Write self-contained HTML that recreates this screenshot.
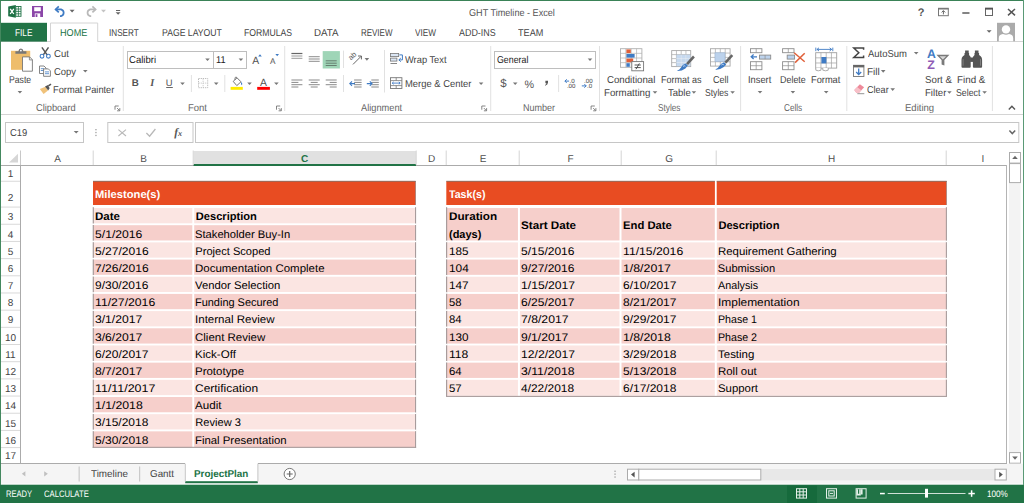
<!DOCTYPE html>
<html lang="en"><head><meta charset="utf-8"><title>GHT Timeline - Excel</title>
<style>
html,body{margin:0;padding:0;background:#fff;}
body{width:1024px;height:503px;overflow:hidden;position:relative;font-family:"Liberation Sans", sans-serif;text-rendering:geometricPrecision;}
#app{position:absolute;left:0;top:0;width:1024px;height:503px;overflow:hidden;background:#fff;}
#app div,#app span,#app svg{position:absolute;box-sizing:border-box;}
#app span.t,#app span.c{white-space:nowrap;}
</style></head><body><div id="app">
<div style="left:0px;top:0px;width:1024px;height:503px;background:#fff;"></div>
<svg style="left:0;top:0" width="1024" height="503" viewBox="0 0 1024 503"><rect x="0" y="41" width="1024" height="1" fill="#d4d4d4"/><rect x="0" y="114" width="1024" height="1" fill="#d4d4d4"/><rect x="1" y="22.8" width="46" height="18.8" fill="#217346"/><path d="M50.5 41.5 V23 H97.7 V41.5" fill="#fff" stroke="#d4d4d4" stroke-width="1"/><rect x="51" y="41" width="46.2" height="1.2" fill="#fff"/><g transform="translate(8.2,5)"><path d="M0 1.6 L7.6 0 V12.8 L0 11.2 Z" fill="#1e7145"/><rect x="7.6" y="1.5" width="5.2" height="9.8" fill="#fff" stroke="#1e7145" stroke-width="0.9"/><path d="M7.6 4 H12.8 M7.6 6.4 H12.8 M7.6 8.8 H12.8 M10.2 1.5 V11.3" stroke="#1e7145" stroke-width="0.8" fill="none"/><path d="M2 3.8 L5.6 9 M5.6 3.8 L2 9" stroke="#fff" stroke-width="1.3" fill="none"/></g><g transform="translate(32,6)"><path d="M0 0 H11 V11 H0 Z" fill="#8b46a8"/><rect x="2.2" y="1.2" width="6.6" height="4" fill="#fff"/><rect x="2.8" y="7.4" width="5.4" height="3.6" fill="#fff"/><rect x="3.6" y="8.2" width="1.8" height="2.8" fill="#8b46a8"/></g><g transform="translate(54.4,6)" fill="none" stroke="#3f7bc4" stroke-width="1.7"><path d="M1.2 3.4 H6.6 A4 3.6 0 0 1 6.6 10.2 H5.6"/><path d="M4.4 0.4 L1.2 3.4 L4.4 6.4"/></g><path d="M69.6 9.8 H74.6 L72.1 12.6 Z" fill="#666"/><g transform="translate(85.6,6)" fill="none" stroke="#b9b9b9" stroke-width="1.7"><path d="M10 3.4 H4.6 A4 3.6 0 0 0 4.6 10.2 H5.6"/><path d="M6.8 0.4 L10 3.4 L6.8 6.4"/></g><path d="M101 9.8 H106 L103.5 12.6 Z" fill="#c4c4c4"/><path d="M116 10 H120.2 V11 H116 Z M115.6 12.2 H120.6 L118.1 14.8 Z" fill="#666"/><g transform="translate(938,7.8)"><rect x="0.5" y="0.5" width="9.8" height="7.4" fill="#fff" stroke="#777" stroke-width="1"/><rect x="0.5" y="0.3" width="9.8" height="1.4" fill="#777"/><path d="M5.4 6.6 V3 M3.6 4.6 L5.4 2.8 L7.2 4.6" stroke="#666" stroke-width="1" fill="none"/></g><rect x="962.3" y="12.2" width="7.2" height="1.6" fill="#666"/><g transform="translate(985,7.8)"><rect x="0.5" y="0.5" width="7" height="7.2" fill="#fff" stroke="#666" stroke-width="1"/><rect x="0" y="0" width="8" height="1.8" fill="#555"/></g><path d="M1008 9 L1015 15.4 M1015 9 L1008 15.4" stroke="#555" stroke-width="1.5" fill="none"/><path d="M986.6 30.2 H991.6 L989.1 32.8 Z" fill="#666"/><g transform="translate(997,22.8)"><rect width="18" height="18.5" fill="#ababab"/><circle cx="9" cy="6.6" r="4.2" fill="#fff"/><path d="M1.8 18.5 V15.5 Q1.8 11.5 6 11.2 Q9 12.6 12 11.2 Q16.2 11.5 16.2 15.5 V18.5 Z" fill="#fff"/></g></svg>
<span class="t" style="top:27px;font-size:10px;line-height:14px;color:#fff;left:14.89px;transform:scaleX(0.825);transform-origin:0 50%;">FILE</span>
<span class="t" style="top:27px;font-size:10px;line-height:14px;color:#217346;left:60.08px;transform:scaleX(0.911);transform-origin:0 50%;">HOME</span>
<span class="t" style="top:27px;font-size:10px;line-height:14px;color:#444;left:109.11px;transform:scaleX(0.813);transform-origin:0 50%;">INSERT</span>
<span class="t" style="top:27px;font-size:10px;line-height:14px;color:#444;left:161.86px;transform:scaleX(0.867);transform-origin:0 50%;">PAGE LAYOUT</span>
<span class="t" style="top:27px;font-size:10px;line-height:14px;color:#444;left:243.86px;transform:scaleX(0.866);transform-origin:0 50%;">FORMULAS</span>
<span class="t" style="top:27px;font-size:10px;line-height:14px;color:#444;left:314.29px;transform:scaleX(0.972);transform-origin:0 50%;">DATA</span>
<span class="t" style="top:27px;font-size:10px;line-height:14px;color:#444;left:361.16px;transform:scaleX(0.796);transform-origin:0 50%;">REVIEW</span>
<span class="t" style="top:27px;font-size:10px;line-height:14px;color:#444;left:415.20px;transform:scaleX(0.82);transform-origin:0 50%;">VIEW</span>
<span class="t" style="top:27px;font-size:10px;line-height:14px;color:#444;left:459.08px;transform:scaleX(0.893);transform-origin:0 50%;">ADD-INS</span>
<span class="t" style="top:27px;font-size:10px;line-height:14px;color:#444;left:518.21px;transform:scaleX(0.91);transform-origin:0 50%;">TEAM</span>
<span class="t" style="top:7px;font-size:10px;line-height:14px;color:#555;left:468.58px;transform:scaleX(0.911);transform-origin:0 50%;">GHT Timeline - Excel</span>
<span class="t" style="top:6px;font-size:11px;line-height:15px;font-weight:bold;color:#555;left:771.00px;width:300px;text-align:center;">?</span>
<svg style="left:0;top:0" width="1024" height="503" viewBox="0 0 1024 503"><g transform="translate(11,48.6)"><rect x="0" y="2.2" width="19.2" height="19" fill="#eebd6c"/><path d="M4.4 5.2 V2.6 H7.4 Q7.6 0 9.9 0 Q12.2 0 12.4 2.6 H15.4 V5.2 Z" fill="#777"/><circle cx="9.9" cy="2" r="0.9" fill="#fff"/><path d="M11.5 8.3 H18.6 L21.4 11.1 V22.6 H11.5 Z" fill="#fff" stroke="#777" stroke-width="0.9"/><path d="M18.4 8.4 V11.3 H21.3" fill="none" stroke="#777" stroke-width="0.8"/></g><path d="M17.60 91.00 H22.20 L19.90 93.60 Z" fill="#777"/><g transform="translate(39.7,47.1)"><path d="M2.2 0.3 L7.6 8 M8.8 0.3 L3.4 8" stroke="#555" stroke-width="1.5" fill="none"/><circle cx="2.3" cy="9.1" r="1.9" fill="none" stroke="#3f7bc4" stroke-width="1.1"/><circle cx="8.7" cy="9.1" r="1.9" fill="none" stroke="#3f7bc4" stroke-width="1.1"/></g><g transform="translate(39,65.5)"><path d="M0.5 0.5 H5 L7 2.5 V8 H0.5 Z" fill="#fff" stroke="#777" stroke-width="0.9"/><path d="M1.8 3.2 H5 M1.8 5 H5" stroke="#3f7bc4" stroke-width="0.8"/><path d="M4.6 3.4 H9.4 L11.4 5.4 V10.8 H4.6 Z" fill="#fff" stroke="#777" stroke-width="0.9"/><path d="M6 6.4 H10 M6 8.2 H10" stroke="#3f7bc4" stroke-width="0.8"/></g><path d="M83.00 69.90 H87.60 L85.30 72.50 Z" fill="#777"/><g transform="translate(39.4,83.9)"><path d="M0.4 5.2 L6 2.8 L8.6 6.6 L4.2 10.2 Z" fill="#f0c27a"/><path d="M5.6 2.6 L8.6 1.2 L10.2 4.4 L8.8 6.6 Z" fill="#555"/><path d="M9 2 L11.6 0.2" stroke="#555" stroke-width="1.6"/></g><g transform="translate(114.5,105.5)" fill="none" stroke="#777" stroke-width="0.9"><path d="M0.5 4.2 V0.5 H4.2"/><path d="M2.6 2.6 L5 5 M5.3 2.6 V5.3 H2.6"/></g><rect x="122.8" y="46" width="1" height="65" fill="#e1e1e1"/><rect x="127.5" y="51.5" width="86" height="17" fill="#fff" stroke="#bebebe" stroke-width="1"/><rect x="213.5" y="51.5" width="33" height="17" fill="#fff" stroke="#bebebe" stroke-width="1"/><path d="M205.20 58.50 H209.80 L207.50 61.10 Z" fill="#777"/><path d="M238.60 58.50 H243.20 L240.90 61.10 Z" fill="#777"/><path d="M258.2 56.4 L260 54.2 L261.8 56.4 Z" fill="#3f7bc4"/><path d="M275.4 54 H279 L277.2 56.2 Z" fill="#3f7bc4"/><rect x="166.2" y="87" width="6.6" height="0.9" fill="#555"/><path d="M180.20 82.50 H184.80 L182.50 85.10 Z" fill="#777"/><rect x="190.9" y="75" width="1" height="17" fill="#e1e1e1"/><g transform="translate(198,78)"><rect x="0.5" y="0.5" width="9.2" height="9.2" fill="none" stroke="#b0b0b0" stroke-width="0.9" stroke-dasharray="1.2 1"/><path d="M5.1 0.5 V9.7 M0.5 5.1 H9.7" stroke="#c4c4c4" stroke-width="0.9" stroke-dasharray="1.2 1"/></g><path d="M213.90 82.50 H218.50 L216.20 85.10 Z" fill="#777"/><rect x="224.3" y="75" width="1" height="17" fill="#e1e1e1"/><g transform="translate(230.6,76.8)"><path d="M2.6 4.6 L6.4 1 L10.4 5 L6.2 8.8 Z" fill="#fff" stroke="#666" stroke-width="0.9"/><path d="M4.4 3.2 V1.4 Q4.4 0.3 5.4 0.3 Q6.4 0.3 6.4 1.4" fill="none" stroke="#666" stroke-width="0.8"/><path d="M10.4 5 Q12.4 7 11.4 8.4 Q10.2 8.4 10.4 5 Z" fill="#3f7bc4"/><rect x="0" y="10.1" width="12.2" height="2.9" fill="#ffec00"/></g><path d="M247.20 82.50 H251.80 L249.50 85.10 Z" fill="#777"/><rect x="257.2" y="86.9" width="12.7" height="2.9" fill="#f00"/><path d="M274.10 82.50 H278.70 L276.40 85.10 Z" fill="#777"/><g transform="translate(276,105.5)" fill="none" stroke="#777" stroke-width="0.9"><path d="M0.5 4.2 V0.5 H4.2"/><path d="M2.6 2.6 L5 5 M5.3 2.6 V5.3 H2.6"/></g><rect x="284.2" y="46" width="1" height="65" fill="#e1e1e1"/><rect x="291.4" y="52.9" width="11" height="1.2" fill="#666"/><rect x="291.4" y="55.5" width="11" height="1" fill="#999"/><rect x="291.4" y="57.8" width="11" height="1" fill="#999"/><rect x="308.7" y="56.2" width="11" height="1" fill="#8c8c8c"/><rect x="308.7" y="58.5" width="11" height="1" fill="#8c8c8c"/><rect x="308.7" y="60.8" width="11" height="1" fill="#8c8c8c"/><rect x="322.7" y="51.1" width="17.2" height="17.4" fill="#9fd5b7"/><rect x="325.7" y="60.3" width="11" height="1" fill="#667f70"/><rect x="325.7" y="62.7" width="11" height="1" fill="#667f70"/><rect x="325.7" y="65.0" width="11" height="1" fill="#667f70"/><rect x="291.4" y="79.5" width="11" height="1" fill="#8a8a8a"/><rect x="291.4" y="81.9" width="7" height="1" fill="#8a8a8a"/><rect x="291.4" y="84.2" width="11" height="1" fill="#8a8a8a"/><rect x="291.4" y="86.5" width="7" height="1" fill="#8a8a8a"/><rect x="308.7" y="79.5" width="11" height="1" fill="#8a8a8a"/><rect x="310.7" y="81.9" width="7" height="1" fill="#8a8a8a"/><rect x="308.7" y="84.2" width="11" height="1" fill="#8a8a8a"/><rect x="310.7" y="86.5" width="7" height="1" fill="#8a8a8a"/><rect x="325.7" y="79.5" width="11" height="1" fill="#8a8a8a"/><rect x="329.7" y="81.9" width="7" height="1" fill="#8a8a8a"/><rect x="325.7" y="84.2" width="11" height="1" fill="#8a8a8a"/><rect x="329.7" y="86.5" width="7" height="1" fill="#8a8a8a"/><rect x="343.0" y="50.6" width="1" height="17.4" fill="#e1e1e1"/><rect x="343.0" y="75" width="1" height="17" fill="#e1e1e1"/><g transform="translate(349.4,54)"><text x="0" y="0" font-size="7.4" fill="#555" transform="translate(1.6,6.6) rotate(-45)" font-family="Liberation Sans, sans-serif">ab</text><path d="M3.6 10.4 L11.6 2.4 M8.6 2 H12 V5.4" fill="none" stroke="#555" stroke-width="0.9"/></g><path d="M364.60 58.10 H369.20 L366.90 60.70 Z" fill="#777"/><rect x="354.1" y="79.5" width="7.5" height="1" fill="#8a8a8a"/><rect x="354.1" y="81.9" width="7.5" height="1" fill="#8a8a8a"/><rect x="354.1" y="84.2" width="7.5" height="1" fill="#8a8a8a"/><rect x="354.1" y="86.5" width="7.5" height="1" fill="#8a8a8a"/><path d="M350.0 83.6 H355.0 M352.0 81.4 L349.8 83.6 L352.0 85.8" fill="none" stroke="#3f7bc4" stroke-width="1.1"/><rect x="371.3" y="79.5" width="7.5" height="1" fill="#8a8a8a"/><rect x="371.3" y="81.9" width="7.5" height="1" fill="#8a8a8a"/><rect x="371.3" y="84.2" width="7.5" height="1" fill="#8a8a8a"/><rect x="371.3" y="86.5" width="7.5" height="1" fill="#8a8a8a"/><path d="M366.8 83.6 H371.8 M369.8 81.4 L372.0 83.6 L369.8 85.8" fill="none" stroke="#3f7bc4" stroke-width="1.1"/><rect x="384.0" y="50" width="1" height="42.5" fill="#e1e1e1"/><g transform="translate(390,52.9)"><rect x="0.5" y="0.5" width="8.2" height="3.2" fill="#dbe6f4" stroke="#777" stroke-width="0.8"/><rect x="0.5" y="5.2" width="6.4" height="3" fill="#dbe6f4" stroke="#777" stroke-width="0.8"/><path d="M0.5 10.6 H7" stroke="#777" stroke-width="0.9"/><path d="M9.4 2 H12.4 V7 H9 M10.8 5.2 L8.8 7 L10.8 8.8" fill="none" stroke="#3f7bc4" stroke-width="1"/></g><g transform="translate(390,77.2)"><rect x="0.5" y="0.5" width="11.4" height="10.8" fill="#fff" stroke="#777" stroke-width="0.9"/><path d="M0.5 3.4 H11.9 M0.5 8.4 H11.9 M6.2 0.5 V3.4 M6.2 8.4 V11.3" stroke="#777" stroke-width="0.8"/><path d="M2.4 5.9 H10 M3.6 4.7 L2.2 5.9 L3.6 7.1 M8.8 4.7 L10.2 5.9 L8.8 7.1" fill="none" stroke="#3f7bc4" stroke-width="0.9"/></g><path d="M478.80 82.50 H483.40 L481.10 85.10 Z" fill="#777"/><g transform="translate(481.3,105.5)" fill="none" stroke="#777" stroke-width="0.9"><path d="M0.5 4.2 V0.5 H4.2"/><path d="M2.6 2.6 L5 5 M5.3 2.6 V5.3 H2.6"/></g><rect x="490.2" y="46" width="1" height="65" fill="#e1e1e1"/><rect x="494.5" y="51.5" width="101" height="17" fill="#fff" stroke="#bebebe" stroke-width="1"/><path d="M587.70 58.50 H592.30 L590.00 61.10 Z" fill="#777"/><path d="M512.90 82.50 H517.50 L515.20 85.10 Z" fill="#777"/><path d="M545.4 80.8 H548 V82.6 Q548 84.8 545 85.8 V84.9 Q546.4 84.3 546.4 83.2 H545.4 Z" fill="#555"/><rect x="558.1" y="75" width="1" height="17" fill="#e1e1e1"/><g transform="translate(564.5,78.5)"><path d="M0.4 2.6 H4.6 M2.2 0.8 L0.4 2.6 L2.2 4.4" fill="none" stroke="#3f7bc4" stroke-width="1"/><text x="5" y="4.4" font-family="Liberation Sans, sans-serif" font-size="6.2" fill="#444">.0</text><text x="2.4" y="9.4" font-family="Liberation Sans, sans-serif" font-size="6.2" fill="#444">.00</text></g><g transform="translate(581.4,78.5)"><path d="M0.4 7.4 H4.8 M3 5.6 L4.8 7.4 L3 9.2" fill="none" stroke="#3f7bc4" stroke-width="1"/><text x="2.6" y="4.4" font-family="Liberation Sans, sans-serif" font-size="6.2" fill="#444">.00</text><text x="5.6" y="9.4" font-family="Liberation Sans, sans-serif" font-size="6.2" fill="#444">.0</text></g><g transform="translate(590.6,105.5)" fill="none" stroke="#777" stroke-width="0.9"><path d="M0.5 4.2 V0.5 H4.2"/><path d="M2.6 2.6 L5 5 M5.3 2.6 V5.3 H2.6"/></g><rect x="599.0" y="46" width="1" height="65" fill="#e1e1e1"/><g transform="translate(620,48.2)"><rect x="0.5" y="0.5" width="21.4" height="18.6" fill="#fff" stroke="#b0b0b0" stroke-width="0.9"/><path d="M5.85 0.5 V19.1" stroke="#b0b0b0" stroke-width="0.7"/><path d="M11.20 0.5 V19.1" stroke="#b0b0b0" stroke-width="0.7"/><path d="M16.55 0.5 V19.1" stroke="#b0b0b0" stroke-width="0.7"/><path d="M0.5 5.15 H21.9" stroke="#b0b0b0" stroke-width="0.7"/><path d="M0.5 9.80 H21.9" stroke="#b0b0b0" stroke-width="0.7"/><path d="M0.5 14.45 H21.9" stroke="#b0b0b0" stroke-width="0.7"/><rect x="6.4" y="1.2" width="4.4" height="3.6" fill="#e0603a"/><rect x="6.4" y="5.8" width="8.2" height="3.6" fill="#3f7bc4"/><rect x="6.4" y="10.4" width="6.8" height="3.6" fill="#e0603a"/><rect x="6.4" y="15" width="3.4" height="3.6" fill="#3f7bc4"/><rect x="11.8" y="13.4" width="11.8" height="9.2" fill="#fff" stroke="#777" stroke-width="0.9"/><path d="M14.6 16.8 H20.8 M14.6 19.4 H20.8 M19.4 15.2 L16 21" stroke="#444" stroke-width="0.9" fill="none"/></g><path d="M652.70 91.20 H657.30 L655.00 93.80 Z" fill="#777"/><g transform="translate(671.2,50.1)"><rect x="0.5" y="0.5" width="19" height="16" fill="#fff" stroke="#a8a8a8" stroke-width="0.9"/><path d="M5.25 0.5 V16.5" stroke="#a8a8a8" stroke-width="0.7"/><path d="M10.00 0.5 V16.5" stroke="#a8a8a8" stroke-width="0.7"/><path d="M14.75 0.5 V16.5" stroke="#a8a8a8" stroke-width="0.7"/><path d="M0.5 4.50 H19.5" stroke="#a8a8a8" stroke-width="0.7"/><path d="M0.5 8.50 H19.5" stroke="#a8a8a8" stroke-width="0.7"/><path d="M0.5 12.50 H19.5" stroke="#a8a8a8" stroke-width="0.7"/><rect x="5.2" y="4.6" width="14" height="11.6" fill="#bcd2ec" opacity="0.85"/><path d="M5.2 8.5 H19.4 M5.2 12.4 H19.4 M10 4.6 V16.4 M14.7 4.6 V16.4" stroke="#e8eef6" stroke-width="0.7"/></g><g transform="translate(676.4,55)"><path d="M9.6 8.2 L16.6 0.6 L18.4 2.4 L11.6 10 Z" fill="#666"/><path d="M9.2 8.6 L11.4 10.6 L9 13.4 Q5 16.4 0.4 16 Q3.4 14.4 4.6 12.4 Q6 9.6 9.2 8.6 Z" fill="#3f7bc4"/><path d="M6.6 11.4 Q8 10.2 9 11.2" stroke="#cfe0f4" stroke-width="0.9" fill="none"/></g><path d="M691.60 91.20 H696.20 L693.90 93.80 Z" fill="#777"/><g transform="translate(710,48.2)"><rect x="0.5" y="0.5" width="19.6" height="17.4" fill="#fff" stroke="#a8a8a8" stroke-width="0.9"/><path d="M5.40 0.5 V17.9" stroke="#a8a8a8" stroke-width="0.7"/><path d="M10.30 0.5 V17.9" stroke="#a8a8a8" stroke-width="0.7"/><path d="M15.20 0.5 V17.9" stroke="#a8a8a8" stroke-width="0.7"/><path d="M0.5 4.85 H20.1" stroke="#a8a8a8" stroke-width="0.7"/><path d="M0.5 9.20 H20.1" stroke="#a8a8a8" stroke-width="0.7"/><path d="M0.5 13.55 H20.1" stroke="#a8a8a8" stroke-width="0.7"/><rect x="5" y="4.6" width="10" height="8.6" fill="#bcd2ec" stroke="#9ab4d4" stroke-width="0.6"/></g><g transform="translate(714.8,53.6)"><path d="M9.6 8.2 L16.6 0.6 L18.4 2.4 L11.6 10 Z" fill="#666"/><path d="M9.2 8.6 L11.4 10.6 L9 13.4 Q5 16.4 0.4 16 Q3.4 14.4 4.6 12.4 Q6 9.6 9.2 8.6 Z" fill="#3f7bc4"/><path d="M6.6 11.4 Q8 10.2 9 11.2" stroke="#cfe0f4" stroke-width="0.9" fill="none"/></g><path d="M730.30 91.20 H734.90 L732.60 93.80 Z" fill="#777"/><rect x="740.1" y="46" width="1" height="65" fill="#e1e1e1"/><g transform="translate(750,48.2)"><g transform="translate(0,0)"><rect x="0.5" y="0.5" width="11.4" height="4" fill="#fff" stroke="#8c8c8c" stroke-width="0.9"/><path d="M6.20 0.5 V4.5" stroke="#8c8c8c" stroke-width="0.7"/></g><g transform="translate(9,6.4)"><rect x="0.5" y="0.5" width="11.2" height="4" fill="#bcd2ec" stroke="#8c8c8c" stroke-width="0.9"/><path d="M6.10 0.5 V4.5" stroke="#8c8c8c" stroke-width="0.7"/></g><g transform="translate(0,13)"><rect x="0.5" y="0.5" width="11.4" height="8" fill="#fff" stroke="#8c8c8c" stroke-width="0.9"/><path d="M6.20 0.5 V8.5" stroke="#8c8c8c" stroke-width="0.7"/><path d="M0.5 4.50 H11.9" stroke="#8c8c8c" stroke-width="0.7"/></g><path d="M1.4 8.6 H7 M3.6 6.4 L1.2 8.6 L3.6 10.8" fill="none" stroke="#3f7bc4" stroke-width="1.3"/></g><path d="M757.70 91.00 H762.30 L760.00 93.60 Z" fill="#777"/><g transform="translate(782.1,48.2)"><g transform="translate(0,0)"><rect x="0.5" y="0.5" width="11.4" height="4" fill="#fff" stroke="#8c8c8c" stroke-width="0.9"/><path d="M6.20 0.5 V4.5" stroke="#8c8c8c" stroke-width="0.7"/></g><g transform="translate(4.6,6.4)"><rect x="0.5" y="0.5" width="7.4" height="4" fill="#bcd2ec" stroke="#8c8c8c" stroke-width="0.9"/></g><g transform="translate(0,13)"><rect x="0.5" y="0.5" width="11.4" height="8" fill="#fff" stroke="#8c8c8c" stroke-width="0.9"/><path d="M6.20 0.5 V8.5" stroke="#8c8c8c" stroke-width="0.7"/><path d="M0.5 4.50 H11.9" stroke="#8c8c8c" stroke-width="0.7"/></g><path d="M12 4.6 L22.6 13.6 M22.6 5 L13 14.4" fill="none" stroke="#e0603a" stroke-width="1.5"/></g><path d="M790.60 91.00 H795.20 L792.90 93.60 Z" fill="#777"/><g transform="translate(815.2,47.6)"><path d="M0.6 0 V3.6 M17.6 0 V3.6 M1.6 1.8 H16.6 M3.8 0.2 L1.8 1.8 L3.8 3.4 M14.4 0.2 L16.4 1.8 L14.4 3.4" fill="none" stroke="#3f7bc4" stroke-width="0.9"/><g transform="translate(0,4.6)"><rect x="0.5" y="0.5" width="21" height="15.4" fill="#fff" stroke="#a0a0a0" stroke-width="0.9"/><path d="M5.75 0.5 V15.9" stroke="#a0a0a0" stroke-width="0.7"/><path d="M11.00 0.5 V15.9" stroke="#a0a0a0" stroke-width="0.7"/><path d="M16.25 0.5 V15.9" stroke="#a0a0a0" stroke-width="0.7"/><path d="M0.5 5.63 H21.5" stroke="#a0a0a0" stroke-width="0.7"/><path d="M0.5 10.77 H21.5" stroke="#a0a0a0" stroke-width="0.7"/></g><rect x="6.2" y="9.4" width="5" height="6.4" fill="#3f7bc4"/><path d="M0.6 20.4 V22.6 Q3 23.8 5.8 22.6 V20.4 M7.6 20.4 V22.6 Q10.4 23.8 13 22.6 V20.4" fill="#fff" stroke="#999" stroke-width="0.8"/></g><path d="M823.90 91.00 H828.50 L826.20 93.60 Z" fill="#777"/><rect x="846.3" y="46" width="1" height="65" fill="#e1e1e1"/><path d="M863.6 49.8 V48 H853.8 L858.8 52.8 L853.8 57.4 H863.6 V55.6" fill="none" stroke="#444" stroke-width="1.5" stroke-linejoin="miter"/><path d="M913.90 51.90 H918.50 L916.20 54.50 Z" fill="#777"/><g transform="translate(853,64.8)"><rect x="0.5" y="0.5" width="10.4" height="11.2" fill="#fff" stroke="#777" stroke-width="0.9"/><rect x="0.3" y="0.2" width="10.8" height="2.4" fill="#666"/><path d="M5.7 3.8 V9.6 M3.2 7.2 L5.7 9.8 L8.2 7.2" fill="none" stroke="#3f7bc4" stroke-width="1.3"/></g><path d="M880.90 70.10 H885.50 L883.20 72.70 Z" fill="#777"/><g transform="translate(853.9,83.9)"><path d="M0.4 6 L6 0.4 L10.2 3.4 L5 9 H2.6 Z" fill="#ee8a9a"/><path d="M0.4 6 L3.2 3.2 L7.4 6.4 L5 9 H2.6 Z" fill="#f7c0c8"/><path d="M3.4 9.8 H10.4" stroke="#888" stroke-width="0.9"/></g><path d="M890.40 88.30 H895.00 L892.70 90.90 Z" fill="#777"/><path d="M936.4 54.8 H949.4 L944.4 60 V65.6 L941.6 64.4 V60 Z" fill="#7a7a7a"/><path d="M939.6 56.2 H946.2 L942.9 59.4 Z" fill="#d8d8d8"/><path d="M947.10 91.20 H951.70 L949.40 93.80 Z" fill="#777"/><g transform="translate(961.5,50.1)"><path d="M3 3 H7.6 V5 L9.2 7 V16.6 Q9.2 17.6 8.2 17.6 H1 Q0 17.6 0 16.6 V9.6 Q0 7.6 1.4 6.2 L3 5 Z" fill="#555"/><path d="M13 3 H17.6 V5 L19.2 6.2 Q20.6 7.6 20.6 9.6 V16.6 Q20.6 17.6 19.6 17.6 H12.4 Q11.4 17.6 11.4 16.6 V7 L13 5 Z" fill="#555"/><rect x="3.6" y="0.4" width="3.6" height="3" fill="#555"/><rect x="13.4" y="0.4" width="3.6" height="3" fill="#555"/><rect x="8.6" y="7.4" width="3.4" height="4.4" fill="#555"/><path d="M1.6 9 V15.6 M19 9 V15.6" stroke="#8a8a8a" stroke-width="0.8"/></g><path d="M982.30 91.20 H986.90 L984.60 93.80 Z" fill="#777"/><rect x="991.9" y="46" width="1" height="65" fill="#e1e1e1"/><path d="M1008.8 109.4 L1011.9 106.2 L1015 109.4" fill="none" stroke="#555" stroke-width="1.4"/></svg>
<span class="t" style="top:74px;font-size:10px;line-height:14px;color:#444;left:9.36px;transform:scaleX(0.866);transform-origin:0 50%;">Paste</span>
<span class="t" style="top:48px;font-size:10px;line-height:14px;color:#444;left:53.65px;transform:scaleX(0.957);transform-origin:0 50%;">Cut</span>
<span class="t" style="top:66px;font-size:10px;line-height:14px;color:#444;left:53.66px;transform:scaleX(0.945);transform-origin:0 50%;">Copy</span>
<span class="t" style="top:84px;font-size:10px;line-height:14px;color:#444;left:53.42px;transform:scaleX(0.928);transform-origin:0 50%;">Format Painter</span>
<span class="t" style="top:102px;font-size:10px;line-height:14px;color:#666;left:36.07px;transform:scaleX(0.926);transform-origin:0 50%;">Clipboard</span>
<span class="t" style="top:54px;font-size:10px;line-height:14px;color:#222;left:129.16px;transform:scaleX(0.953);transform-origin:0 50%;">Calibri</span>
<span class="t" style="top:54px;font-size:10px;line-height:14px;color:#222;left:215.68px;transform:scaleX(0.92);transform-origin:0 50%;">11</span>
<span class="t" style="top:54px;font-size:10.4px;line-height:15px;color:#555;left:252.22px;">A</span>
<span class="t" style="top:56px;font-size:8.2px;line-height:11px;color:#555;left:270.12px;">A</span>
<span class="t" style="top:77px;font-size:9.8px;line-height:14px;font-weight:bold;color:#555;left:131.63px;">B</span>
<span class="t" style="top:77px;font-size:10.2px;line-height:14px;font-weight:bold;font-style:italic;font-family:'Liberation Serif',serif;color:#555;left:150.16px;">I</span>
<span class="t" style="top:76px;font-size:9.4px;line-height:13px;color:#555;left:165.85px;">U</span>
<span class="t" style="top:76px;font-size:10.4px;line-height:15px;color:#555;left:260.02px;">A</span>
<span class="t" style="top:102px;font-size:10px;line-height:14px;color:#666;left:188.30px;transform:scaleX(0.95);transform-origin:0 50%;">Font</span>
<span class="t" style="top:54px;font-size:10px;line-height:14px;color:#444;left:405.29px;transform:scaleX(0.93);transform-origin:0 50%;">Wrap Text</span>
<span class="t" style="top:78px;font-size:10px;line-height:14px;color:#444;left:405.21px;transform:scaleX(0.94);transform-origin:0 50%;">Merge &amp; Center</span>
<span class="t" style="top:102px;font-size:10px;line-height:14px;color:#666;left:360.93px;transform:scaleX(0.925);transform-origin:0 50%;">Alignment</span>
<span class="t" style="top:54px;font-size:10px;line-height:14px;color:#222;left:496.69px;transform:scaleX(0.881);transform-origin:0 50%;">General</span>
<span class="t" style="top:76px;font-size:11.5px;line-height:16px;color:#555;left:500.14px;">$</span>
<span class="t" style="top:78px;font-size:10.8px;line-height:15px;color:#555;left:524.59px;">%</span>
<span class="t" style="top:102px;font-size:10px;line-height:14px;color:#666;left:523.04px;transform:scaleX(0.902);transform-origin:0 50%;">Number</span>
<span class="t" style="top:74px;font-size:10px;line-height:14px;color:#444;left:607.15px;transform:scaleX(0.967);transform-origin:0 50%;">Conditional</span>
<span class="t" style="top:87px;font-size:10px;line-height:14px;color:#444;left:604.29px;transform:scaleX(0.97);transform-origin:0 50%;">Formatting</span>
<span class="t" style="top:74px;font-size:10px;line-height:14px;color:#444;left:660.84px;transform:scaleX(0.901);transform-origin:0 50%;">Format as</span>
<span class="t" style="top:87px;font-size:10px;line-height:14px;color:#444;left:667.60px;transform:scaleX(0.952);transform-origin:0 50%;">Table</span>
<span class="t" style="top:74px;font-size:10px;line-height:14px;color:#444;left:712.58px;transform:scaleX(0.904);transform-origin:0 50%;">Cell</span>
<span class="t" style="top:87px;font-size:10px;line-height:14px;color:#444;left:705.01px;transform:scaleX(0.859);transform-origin:0 50%;">Styles</span>
<span class="t" style="top:102px;font-size:10px;line-height:14px;color:#666;left:658.43px;transform:scaleX(0.825);transform-origin:0 50%;">Styles</span>
<span class="t" style="top:74px;font-size:10px;line-height:14px;color:#444;left:748.48px;transform:scaleX(0.928);transform-origin:0 50%;">Insert</span>
<span class="t" style="top:74px;font-size:10px;line-height:14px;color:#444;left:780.24px;transform:scaleX(0.892);transform-origin:0 50%;">Delete</span>
<span class="t" style="top:74px;font-size:10px;line-height:14px;color:#444;left:811.32px;transform:scaleX(0.926);transform-origin:0 50%;">Format</span>
<span class="t" style="top:102px;font-size:10px;line-height:14px;color:#666;left:784.42px;transform:scaleX(0.817);transform-origin:0 50%;">Cells</span>
<span class="t" style="top:48px;font-size:10px;line-height:14px;color:#444;left:867.52px;transform:scaleX(0.948);transform-origin:0 50%;">AutoSum</span>
<span class="t" style="top:66px;font-size:10px;line-height:14px;color:#444;left:866.97px;">Fill</span>
<span class="t" style="top:84px;font-size:10px;line-height:14px;color:#444;left:867.28px;transform:scaleX(0.906);transform-origin:0 50%;">Clear</span>
<span class="t" style="top:46px;font-size:12.4px;line-height:17px;font-weight:bold;color:#3f7bc4;left:926.60px;transform:scaleX(0.99);transform-origin:0 50%;">A</span>
<span class="t" style="top:57px;font-size:12.4px;line-height:17px;font-weight:bold;color:#8e5bb5;left:927.34px;">Z</span>
<span class="t" style="top:74px;font-size:10px;line-height:14px;color:#444;left:924.53px;transform:scaleX(0.971);transform-origin:0 50%;">Sort &amp;</span>
<span class="t" style="top:87px;font-size:10px;line-height:14px;color:#444;left:924.79px;transform:scaleX(0.961);transform-origin:0 50%;">Filter</span>
<span class="t" style="top:74px;font-size:10px;line-height:14px;color:#444;left:957.38px;transform:scaleX(0.982);transform-origin:0 50%;">Find &amp;</span>
<span class="t" style="top:87px;font-size:10px;line-height:14px;color:#444;left:956.00px;transform:scaleX(0.876);transform-origin:0 50%;">Select</span>
<span class="t" style="top:102px;font-size:10px;line-height:14px;color:#666;left:904.50px;transform:scaleX(0.954);transform-origin:0 50%;">Editing</span>
<svg style="left:0;top:0" width="1024" height="503" viewBox="0 0 1024 503"><rect x="5.5" y="122.5" width="78" height="20" fill="#fff" stroke="#c6c6c6" stroke-width="1"/><path d="M73.70 130.90 H78.70 L76.20 133.50 Z" fill="#777"/><rect x="95.3" y="129.0" width="1.3" height="1.3" fill="#a0a0a0"/><rect x="95.3" y="131.9" width="1.3" height="1.3" fill="#a0a0a0"/><rect x="95.3" y="134.8" width="1.3" height="1.3" fill="#a0a0a0"/><rect x="107.8" y="122.5" width="85.2" height="20" fill="#fff" stroke="#c6c6c6" stroke-width="1"/><rect x="195.5" y="122.5" width="823.3" height="20" fill="#fff" stroke="#c6c6c6" stroke-width="1"/><path d="M118.4 129.6 L126 136 M126 129.6 L118.4 136" fill="none" stroke="#b8b8b8" stroke-width="1.1"/><path d="M146.4 133 L149.6 136.2 L155.4 129" fill="none" stroke="#b8b8b8" stroke-width="1.3"/><path d="M1009.4 130.6 L1012.3 133.6 L1015.2 130.6" fill="none" stroke="#666" stroke-width="1.5"/></svg>
<span class="t" style="top:127px;font-size:10px;line-height:14px;color:#444;left:10.06px;transform:scaleX(0.941);transform-origin:0 50%;">C19</span>
<span class="t" style="top:125px;font-size:11.5px;line-height:16px;font-weight:bold;font-style:italic;font-family:'Liberation Serif',serif;color:#555;left:174.36px;">f</span>
<span class="t" style="top:128px;font-size:8.2px;line-height:11px;font-weight:bold;font-style:italic;font-family:'Liberation Serif',serif;color:#555;left:178.09px;">x</span>
<svg style="left:0;top:0" width="1024" height="503" viewBox="0 0 1024 503"><rect x="0" y="165" width="1007" height="1" fill="#ababab"/><rect x="193.5" y="151" width="222.5" height="14" fill="#e1e1e1"/><rect x="193.5" y="164" width="222.5" height="2" fill="#217346"/><rect x="92.7" y="150.5" width="1" height="14.5" fill="#d4d4d4"/><rect x="192.7" y="150.5" width="1" height="14.5" fill="#d4d4d4"/><rect x="415.7" y="150.5" width="1" height="14.5" fill="#d4d4d4"/><rect x="445.7" y="150.5" width="1" height="14.5" fill="#d4d4d4"/><rect x="518.7" y="150.5" width="1" height="14.5" fill="#d4d4d4"/><rect x="620.7" y="150.5" width="1" height="14.5" fill="#d4d4d4"/><rect x="715.7" y="150.5" width="1" height="14.5" fill="#d4d4d4"/><rect x="945.7" y="150.5" width="1" height="14.5" fill="#d4d4d4"/><rect x="20" y="150.5" width="1" height="14.5" fill="#c8c8c8"/><path d="M18 153.8 V162.4 H9 Z" fill="#d6d6d6"/><rect x="20" y="166" width="1" height="297" fill="#ababab"/><rect x="1" y="180.75" width="19" height="1" fill="#d9d9d9"/><rect x="1" y="206.57" width="19" height="1" fill="#d9d9d9"/><rect x="1" y="223.75" width="19" height="1" fill="#d9d9d9"/><rect x="1" y="240.93" width="19" height="1" fill="#d9d9d9"/><rect x="1" y="258.11" width="19" height="1" fill="#d9d9d9"/><rect x="1" y="275.29" width="19" height="1" fill="#d9d9d9"/><rect x="1" y="292.47" width="19" height="1" fill="#d9d9d9"/><rect x="1" y="309.65" width="19" height="1" fill="#d9d9d9"/><rect x="1" y="326.83" width="19" height="1" fill="#d9d9d9"/><rect x="1" y="344.01" width="19" height="1" fill="#d9d9d9"/><rect x="1" y="361.19" width="19" height="1" fill="#d9d9d9"/><rect x="1" y="378.37" width="19" height="1" fill="#d9d9d9"/><rect x="1" y="395.55" width="19" height="1" fill="#d9d9d9"/><rect x="1" y="412.73" width="19" height="1" fill="#d9d9d9"/><rect x="1" y="429.91" width="19" height="1" fill="#d9d9d9"/><rect x="1" y="447.09" width="19" height="1" fill="#d9d9d9"/><rect x="1006" y="165" width="1" height="299" fill="#b4b4b4"/><rect x="0" y="463" width="1007" height="1" fill="#ababab"/><rect x="93" y="181.3" width="322.6" height="23.7" fill="#E84C22"/><rect x="415.4" y="181" width="0.6" height="24" fill="#8a7a7a"/><rect x="93" y="180.8" width="322.6" height="1" fill="#7a5a4c" opacity="0.8"/><rect x="93" y="208.02" width="99.3" height="15.28" fill="#FBE5E2"/><rect x="194.2" y="208.02" width="221.4" height="15.28" fill="#FBE5E2"/><rect x="93" y="225.2" width="99.3" height="15.28" fill="#F6CFCB"/><rect x="194.2" y="225.2" width="221.4" height="15.28" fill="#F6CFCB"/><rect x="93" y="242.38" width="99.3" height="15.28" fill="#FBE5E2"/><rect x="194.2" y="242.38" width="221.4" height="15.28" fill="#FBE5E2"/><rect x="93" y="259.56" width="99.3" height="15.28" fill="#F6CFCB"/><rect x="194.2" y="259.56" width="221.4" height="15.28" fill="#F6CFCB"/><rect x="93" y="276.74" width="99.3" height="15.28" fill="#FBE5E2"/><rect x="194.2" y="276.74" width="221.4" height="15.28" fill="#FBE5E2"/><rect x="93" y="293.92" width="99.3" height="15.28" fill="#F6CFCB"/><rect x="194.2" y="293.92" width="221.4" height="15.28" fill="#F6CFCB"/><rect x="93" y="311.1" width="99.3" height="15.28" fill="#FBE5E2"/><rect x="194.2" y="311.1" width="221.4" height="15.28" fill="#FBE5E2"/><rect x="93" y="328.28" width="99.3" height="15.28" fill="#F6CFCB"/><rect x="194.2" y="328.28" width="221.4" height="15.28" fill="#F6CFCB"/><rect x="93" y="345.46" width="99.3" height="15.28" fill="#FBE5E2"/><rect x="194.2" y="345.46" width="221.4" height="15.28" fill="#FBE5E2"/><rect x="93" y="362.64" width="99.3" height="15.28" fill="#F6CFCB"/><rect x="194.2" y="362.64" width="221.4" height="15.28" fill="#F6CFCB"/><rect x="93" y="379.82" width="99.3" height="15.28" fill="#FBE5E2"/><rect x="194.2" y="379.82" width="221.4" height="15.28" fill="#FBE5E2"/><rect x="93" y="397.0" width="99.3" height="15.28" fill="#F6CFCB"/><rect x="194.2" y="397.0" width="221.4" height="15.28" fill="#F6CFCB"/><rect x="93" y="414.18" width="99.3" height="15.28" fill="#FBE5E2"/><rect x="194.2" y="414.18" width="221.4" height="15.28" fill="#FBE5E2"/><rect x="93" y="431.36" width="99.3" height="16.03" fill="#F6CFCB"/><rect x="194.2" y="431.36" width="221.4" height="16.03" fill="#F6CFCB"/><rect x="92.7" y="207.2" width="1.2" height="240.7" fill="#a89c9c"/><rect x="415" y="207.2" width="1.1" height="240.7" fill="#a89c9c"/><rect x="92.7" y="446.8" width="323.4" height="1.1" fill="#a89c9c"/><rect x="92" y="223.5" width="2.2" height="1.5" fill="#fff"/><rect x="414.6" y="223.5" width="2" height="1.5" fill="#fff"/><rect x="92" y="240.68" width="2.2" height="1.5" fill="#fff"/><rect x="414.6" y="240.68" width="2" height="1.5" fill="#fff"/><rect x="92" y="257.86" width="2.2" height="1.5" fill="#fff"/><rect x="414.6" y="257.86" width="2" height="1.5" fill="#fff"/><rect x="92" y="275.04" width="2.2" height="1.5" fill="#fff"/><rect x="414.6" y="275.04" width="2" height="1.5" fill="#fff"/><rect x="92" y="292.22" width="2.2" height="1.5" fill="#fff"/><rect x="414.6" y="292.22" width="2" height="1.5" fill="#fff"/><rect x="92" y="309.4" width="2.2" height="1.5" fill="#fff"/><rect x="414.6" y="309.4" width="2" height="1.5" fill="#fff"/><rect x="92" y="326.58" width="2.2" height="1.5" fill="#fff"/><rect x="414.6" y="326.58" width="2" height="1.5" fill="#fff"/><rect x="92" y="343.76" width="2.2" height="1.5" fill="#fff"/><rect x="414.6" y="343.76" width="2" height="1.5" fill="#fff"/><rect x="92" y="360.94" width="2.2" height="1.5" fill="#fff"/><rect x="414.6" y="360.94" width="2" height="1.5" fill="#fff"/><rect x="92" y="378.12" width="2.2" height="1.5" fill="#fff"/><rect x="414.6" y="378.12" width="2" height="1.5" fill="#fff"/><rect x="92" y="395.3" width="2.2" height="1.5" fill="#fff"/><rect x="414.6" y="395.3" width="2" height="1.5" fill="#fff"/><rect x="92" y="412.48" width="2.2" height="1.5" fill="#fff"/><rect x="414.6" y="412.48" width="2" height="1.5" fill="#fff"/><rect x="92" y="429.66" width="2.2" height="1.5" fill="#fff"/><rect x="414.6" y="429.66" width="2" height="1.5" fill="#fff"/><rect x="446.3" y="181.3" width="268.6" height="23.7" fill="#E84C22"/><rect x="446.3" y="180.8" width="268.6" height="1" fill="#7a5a4c" opacity="0.8"/><rect x="716.7" y="181.3" width="229.8" height="23.7" fill="#E84C22"/><rect x="946.2" y="181" width="0.6" height="24" fill="#8a7a7a"/><rect x="716.7" y="180.8" width="230" height="1" fill="#7a5a4c" opacity="0.8"/><rect x="446.3" y="208.02" width="71.65" height="32.46" fill="#F6CFCB"/><rect x="519.95" y="208.02" width="99.55" height="32.46" fill="#F6CFCB"/><rect x="621.5" y="208.02" width="93.3" height="32.46" fill="#F6CFCB"/><rect x="716.8" y="208.02" width="229.6" height="32.46" fill="#F6CFCB"/><rect x="446.3" y="242.38" width="71.65" height="15.28" fill="#FBE5E2"/><rect x="519.95" y="242.38" width="99.55" height="15.28" fill="#FBE5E2"/><rect x="621.5" y="242.38" width="93.3" height="15.28" fill="#FBE5E2"/><rect x="716.8" y="242.38" width="229.6" height="15.28" fill="#FBE5E2"/><rect x="446.3" y="259.56" width="71.65" height="15.28" fill="#F6CFCB"/><rect x="519.95" y="259.56" width="99.55" height="15.28" fill="#F6CFCB"/><rect x="621.5" y="259.56" width="93.3" height="15.28" fill="#F6CFCB"/><rect x="716.8" y="259.56" width="229.6" height="15.28" fill="#F6CFCB"/><rect x="446.3" y="276.74" width="71.65" height="15.28" fill="#FBE5E2"/><rect x="519.95" y="276.74" width="99.55" height="15.28" fill="#FBE5E2"/><rect x="621.5" y="276.74" width="93.3" height="15.28" fill="#FBE5E2"/><rect x="716.8" y="276.74" width="229.6" height="15.28" fill="#FBE5E2"/><rect x="446.3" y="293.92" width="71.65" height="15.28" fill="#F6CFCB"/><rect x="519.95" y="293.92" width="99.55" height="15.28" fill="#F6CFCB"/><rect x="621.5" y="293.92" width="93.3" height="15.28" fill="#F6CFCB"/><rect x="716.8" y="293.92" width="229.6" height="15.28" fill="#F6CFCB"/><rect x="446.3" y="311.1" width="71.65" height="15.28" fill="#FBE5E2"/><rect x="519.95" y="311.1" width="99.55" height="15.28" fill="#FBE5E2"/><rect x="621.5" y="311.1" width="93.3" height="15.28" fill="#FBE5E2"/><rect x="716.8" y="311.1" width="229.6" height="15.28" fill="#FBE5E2"/><rect x="446.3" y="328.28" width="71.65" height="15.28" fill="#F6CFCB"/><rect x="519.95" y="328.28" width="99.55" height="15.28" fill="#F6CFCB"/><rect x="621.5" y="328.28" width="93.3" height="15.28" fill="#F6CFCB"/><rect x="716.8" y="328.28" width="229.6" height="15.28" fill="#F6CFCB"/><rect x="446.3" y="345.46" width="71.65" height="15.28" fill="#FBE5E2"/><rect x="519.95" y="345.46" width="99.55" height="15.28" fill="#FBE5E2"/><rect x="621.5" y="345.46" width="93.3" height="15.28" fill="#FBE5E2"/><rect x="716.8" y="345.46" width="229.6" height="15.28" fill="#FBE5E2"/><rect x="446.3" y="362.64" width="71.65" height="15.28" fill="#F6CFCB"/><rect x="519.95" y="362.64" width="99.55" height="15.28" fill="#F6CFCB"/><rect x="621.5" y="362.64" width="93.3" height="15.28" fill="#F6CFCB"/><rect x="716.8" y="362.64" width="229.6" height="15.28" fill="#F6CFCB"/><rect x="446.3" y="379.82" width="71.65" height="16.03" fill="#FBE5E2"/><rect x="519.95" y="379.82" width="99.55" height="16.03" fill="#FBE5E2"/><rect x="621.5" y="379.82" width="93.3" height="16.03" fill="#FBE5E2"/><rect x="716.8" y="379.82" width="229.6" height="16.03" fill="#FBE5E2"/><rect x="446" y="207.2" width="1.2" height="188.85" fill="#a89c9c"/><rect x="945.85" y="207.2" width="1.1" height="189.25" fill="#a89c9c"/><rect x="446" y="395.85" width="500.95" height="1.1" fill="#a89c9c"/><rect x="445.5" y="240.68" width="2.2" height="1.5" fill="#fff"/><rect x="945.4" y="240.68" width="2" height="1.5" fill="#fff"/><rect x="445.5" y="257.86" width="2.2" height="1.5" fill="#fff"/><rect x="945.4" y="257.86" width="2" height="1.5" fill="#fff"/><rect x="445.5" y="275.04" width="2.2" height="1.5" fill="#fff"/><rect x="945.4" y="275.04" width="2" height="1.5" fill="#fff"/><rect x="445.5" y="292.22" width="2.2" height="1.5" fill="#fff"/><rect x="945.4" y="292.22" width="2" height="1.5" fill="#fff"/><rect x="445.5" y="309.4" width="2.2" height="1.5" fill="#fff"/><rect x="945.4" y="309.4" width="2" height="1.5" fill="#fff"/><rect x="445.5" y="326.58" width="2.2" height="1.5" fill="#fff"/><rect x="945.4" y="326.58" width="2" height="1.5" fill="#fff"/><rect x="445.5" y="343.76" width="2.2" height="1.5" fill="#fff"/><rect x="945.4" y="343.76" width="2" height="1.5" fill="#fff"/><rect x="445.5" y="360.94" width="2.2" height="1.5" fill="#fff"/><rect x="945.4" y="360.94" width="2" height="1.5" fill="#fff"/><rect x="445.5" y="378.12" width="2.2" height="1.5" fill="#fff"/><rect x="945.4" y="378.12" width="2" height="1.5" fill="#fff"/></svg>
<span class="t" style="top:153px;font-size:10px;line-height:14px;color:#505050;left:-92.40px;width:300px;text-align:center;">A</span>
<span class="t" style="top:153px;font-size:10px;line-height:14px;color:#505050;left:-6.40px;width:300px;text-align:center;">B</span>
<span class="t" style="top:153px;font-size:10px;line-height:14px;font-weight:bold;color:#217346;left:154.50px;width:300px;text-align:center;">C</span>
<span class="t" style="top:153px;font-size:10px;line-height:14px;color:#505050;left:281.60px;width:300px;text-align:center;">D</span>
<span class="t" style="top:153px;font-size:10px;line-height:14px;color:#505050;left:333.10px;width:300px;text-align:center;">E</span>
<span class="t" style="top:153px;font-size:10px;line-height:14px;color:#505050;left:420.60px;width:300px;text-align:center;">F</span>
<span class="t" style="top:153px;font-size:10px;line-height:14px;color:#505050;left:519.10px;width:300px;text-align:center;">G</span>
<span class="t" style="top:153px;font-size:10px;line-height:14px;color:#505050;left:681.60px;width:300px;text-align:center;">H</span>
<span class="t" style="top:153px;font-size:10px;line-height:14px;color:#505050;left:832.80px;width:300px;text-align:center;">I</span>
<span class="t" style="top:168px;font-size:10px;line-height:14px;color:#444;left:-139.50px;width:300px;text-align:center;">1</span>
<span class="t" style="top:192px;font-size:10px;line-height:14px;color:#444;left:-139.50px;width:300px;text-align:center;">2</span>
<span class="t" style="top:211px;font-size:10px;line-height:14px;color:#444;left:-139.50px;width:300px;text-align:center;">3</span>
<span class="t" style="top:229px;font-size:10px;line-height:14px;color:#444;left:-139.50px;width:300px;text-align:center;">4</span>
<span class="t" style="top:246px;font-size:10px;line-height:14px;color:#444;left:-139.50px;width:300px;text-align:center;">5</span>
<span class="t" style="top:263px;font-size:10px;line-height:14px;color:#444;left:-139.50px;width:300px;text-align:center;">6</span>
<span class="t" style="top:280px;font-size:10px;line-height:14px;color:#444;left:-139.50px;width:300px;text-align:center;">7</span>
<span class="t" style="top:297px;font-size:10px;line-height:14px;color:#444;left:-139.50px;width:300px;text-align:center;">8</span>
<span class="t" style="top:314px;font-size:10px;line-height:14px;color:#444;left:-139.50px;width:300px;text-align:center;">9</span>
<span class="t" style="top:332px;font-size:10px;line-height:14px;color:#444;left:-139.50px;width:300px;text-align:center;">10</span>
<span class="t" style="top:349px;font-size:10px;line-height:14px;color:#444;left:-139.50px;width:300px;text-align:center;">11</span>
<span class="t" style="top:366px;font-size:10px;line-height:14px;color:#444;left:-139.50px;width:300px;text-align:center;">12</span>
<span class="t" style="top:383px;font-size:10px;line-height:14px;color:#444;left:-139.50px;width:300px;text-align:center;">13</span>
<span class="t" style="top:400px;font-size:10px;line-height:14px;color:#444;left:-139.50px;width:300px;text-align:center;">14</span>
<span class="t" style="top:418px;font-size:10px;line-height:14px;color:#444;left:-139.50px;width:300px;text-align:center;">15</span>
<span class="t" style="top:435px;font-size:10px;line-height:14px;color:#444;left:-139.50px;width:300px;text-align:center;">16</span>
<span class="t" style="top:450px;font-size:10px;line-height:14px;color:#444;left:-139.50px;width:300px;text-align:center;">17</span>
<span class="c" style="top:187px;font-size:11.1px;line-height:16px;font-weight:bold;color:#fff;left:95.40px;transform:scaleX(1.009);transform-origin:0 50%;">Milestone(s)</span>
<span class="c" style="top:209px;font-size:11.1px;line-height:16px;font-weight:bold;color:#000;left:95.40px;transform:scaleX(1.039);transform-origin:0 50%;">Date</span>
<span class="c" style="top:209px;font-size:11.1px;line-height:16px;font-weight:bold;color:#000;left:195.80px;">Description</span>
<span class="c" style="top:227px;font-size:11.1px;line-height:16px;color:#000;left:94.90px;transform:scaleX(1.096);transform-origin:0 50%;">5/1/2016</span>
<span class="c" style="top:227px;font-size:11.1px;line-height:16px;color:#000;left:195.30px;transform:scaleX(1.009);transform-origin:0 50%;">Stakeholder Buy-In</span>
<span class="c" style="top:244px;font-size:11.1px;line-height:16px;color:#000;left:94.90px;transform:scaleX(1.087);transform-origin:0 50%;">5/27/2016</span>
<span class="c" style="top:244px;font-size:11.1px;line-height:16px;color:#000;left:195.30px;">Project Scoped</span>
<span class="c" style="top:261px;font-size:11.1px;line-height:16px;color:#000;left:94.90px;transform:scaleX(1.087);transform-origin:0 50%;">7/26/2016</span>
<span class="c" style="top:261px;font-size:11.1px;line-height:16px;color:#000;left:195.30px;transform:scaleX(1.035);transform-origin:0 50%;">Documentation Complete</span>
<span class="c" style="top:278px;font-size:11.1px;line-height:16px;color:#000;left:94.90px;transform:scaleX(1.081);transform-origin:0 50%;">9/30/2016</span>
<span class="c" style="top:278px;font-size:11.1px;line-height:16px;color:#000;left:195.30px;transform:scaleX(1.018);transform-origin:0 50%;">Vendor Selection</span>
<span class="c" style="top:295px;font-size:11.1px;line-height:16px;color:#000;left:94.90px;transform:scaleX(1.1);transform-origin:0 50%;">11/27/2016</span>
<span class="c" style="top:295px;font-size:11.1px;line-height:16px;color:#000;left:195.30px;transform:scaleX(0.987);transform-origin:0 50%;">Funding Secured</span>
<span class="c" style="top:312px;font-size:11.1px;line-height:16px;color:#000;left:94.90px;transform:scaleX(1.094);transform-origin:0 50%;">3/1/2017</span>
<span class="c" style="top:312px;font-size:11.1px;line-height:16px;color:#000;left:195.30px;transform:scaleX(1.041);transform-origin:0 50%;">Internal Review</span>
<span class="c" style="top:330px;font-size:11.1px;line-height:16px;color:#000;left:94.90px;transform:scaleX(1.094);transform-origin:0 50%;">3/6/2017</span>
<span class="c" style="top:330px;font-size:11.1px;line-height:16px;color:#000;left:195.30px;transform:scaleX(1.035);transform-origin:0 50%;">Client Review</span>
<span class="c" style="top:347px;font-size:11.1px;line-height:16px;color:#000;left:94.90px;transform:scaleX(1.084);transform-origin:0 50%;">6/20/2017</span>
<span class="c" style="top:347px;font-size:11.1px;line-height:16px;color:#000;left:195.30px;transform:scaleX(1.043);transform-origin:0 50%;">Kick-Off</span>
<span class="c" style="top:364px;font-size:11.1px;line-height:16px;color:#000;left:94.90px;transform:scaleX(1.094);transform-origin:0 50%;">8/7/2017</span>
<span class="c" style="top:364px;font-size:11.1px;line-height:16px;color:#000;left:195.30px;transform:scaleX(1.035);transform-origin:0 50%;">Prototype</span>
<span class="c" style="top:381px;font-size:11.1px;line-height:16px;color:#000;left:94.90px;transform:scaleX(1.12);transform-origin:0 50%;">11/11/2017</span>
<span class="c" style="top:381px;font-size:11.1px;line-height:16px;color:#000;left:195.30px;transform:scaleX(1.078);transform-origin:0 50%;">Certification</span>
<span class="c" style="top:398px;font-size:11.1px;line-height:16px;color:#000;left:94.90px;transform:scaleX(1.105);transform-origin:0 50%;">1/1/2018</span>
<span class="c" style="top:398px;font-size:11.1px;line-height:16px;color:#000;left:195.30px;transform:scaleX(1.045);transform-origin:0 50%;">Audit</span>
<span class="c" style="top:415px;font-size:11.1px;line-height:16px;color:#000;left:94.90px;transform:scaleX(1.08);transform-origin:0 50%;">3/15/2018</span>
<span class="c" style="top:415px;font-size:11.1px;line-height:16px;color:#000;left:195.30px;">Review 3</span>
<span class="c" style="top:433px;font-size:11.1px;line-height:16px;color:#000;left:94.90px;transform:scaleX(1.083);transform-origin:0 50%;">5/30/2018</span>
<span class="c" style="top:433px;font-size:11.1px;line-height:16px;color:#000;left:195.30px;transform:scaleX(1.024);transform-origin:0 50%;">Final Presentation</span>
<span class="c" style="top:187px;font-size:11.1px;line-height:16px;font-weight:bold;color:#fff;left:449.20px;transform:scaleX(0.958);transform-origin:0 50%;">Task(s)</span>
<span class="c" style="top:218px;font-size:11.1px;line-height:16px;font-weight:bold;color:#000;left:521.00px;transform:scaleX(1.051);transform-origin:0 50%;">Start Date</span>
<span class="c" style="top:218px;font-size:11.1px;line-height:16px;font-weight:bold;color:#000;left:622.90px;transform:scaleX(1.015);transform-origin:0 50%;">End Date</span>
<span class="c" style="top:218px;font-size:11.1px;line-height:16px;font-weight:bold;color:#000;left:718.40px;">Description</span>
<span class="c" style="top:209px;font-size:11.1px;line-height:16px;font-weight:bold;color:#000;left:449.20px;transform:scaleX(1.054);transform-origin:0 50%;">Duration</span>
<span class="c" style="top:227px;font-size:11.1px;line-height:16px;font-weight:bold;color:#000;left:449.20px;transform:scaleX(0.989);transform-origin:0 50%;">(days)</span>
<span class="c" style="top:244px;font-size:11.1px;line-height:16px;color:#000;left:448.60px;transform:scaleX(1.054);transform-origin:0 50%;">185</span>
<span class="c" style="top:244px;font-size:11.1px;line-height:16px;color:#000;left:521.10px;transform:scaleX(1.084);transform-origin:0 50%;">5/15/2016</span>
<span class="c" style="top:244px;font-size:11.1px;line-height:16px;color:#000;left:622.60px;transform:scaleX(1.1);transform-origin:0 50%;">11/15/2016</span>
<span class="c" style="top:244px;font-size:11.1px;line-height:16px;color:#000;left:717.85px;transform:scaleX(1.029);transform-origin:0 50%;">Requirement Gathering</span>
<span class="c" style="top:261px;font-size:11.1px;line-height:16px;color:#000;left:448.60px;transform:scaleX(1.067);transform-origin:0 50%;">104</span>
<span class="c" style="top:261px;font-size:11.1px;line-height:16px;color:#000;left:521.10px;transform:scaleX(1.081);transform-origin:0 50%;">9/27/2016</span>
<span class="c" style="top:261px;font-size:11.1px;line-height:16px;color:#000;left:622.60px;transform:scaleX(1.11);transform-origin:0 50%;">1/8/2017</span>
<span class="c" style="top:261px;font-size:11.1px;line-height:16px;color:#000;left:717.85px;">Submission</span>
<span class="c" style="top:278px;font-size:11.1px;line-height:16px;color:#000;left:448.60px;transform:scaleX(1.061);transform-origin:0 50%;">147</span>
<span class="c" style="top:278px;font-size:11.1px;line-height:16px;color:#000;left:521.10px;transform:scaleX(1.096);transform-origin:0 50%;">1/15/2017</span>
<span class="c" style="top:278px;font-size:11.1px;line-height:16px;color:#000;left:622.60px;transform:scaleX(1.084);transform-origin:0 50%;">6/10/2017</span>
<span class="c" style="top:278px;font-size:11.1px;line-height:16px;color:#000;left:717.85px;transform:scaleX(0.969);transform-origin:0 50%;">Analysis</span>
<span class="c" style="top:295px;font-size:11.1px;line-height:16px;color:#000;left:448.60px;transform:scaleX(1.016);transform-origin:0 50%;">58</span>
<span class="c" style="top:295px;font-size:11.1px;line-height:16px;color:#000;left:521.10px;transform:scaleX(1.084);transform-origin:0 50%;">6/25/2017</span>
<span class="c" style="top:295px;font-size:11.1px;line-height:16px;color:#000;left:622.60px;transform:scaleX(1.083);transform-origin:0 50%;">8/21/2017</span>
<span class="c" style="top:295px;font-size:11.1px;line-height:16px;color:#000;left:717.85px;transform:scaleX(1.075);transform-origin:0 50%;">Implementation</span>
<span class="c" style="top:312px;font-size:11.1px;line-height:16px;color:#000;left:448.60px;transform:scaleX(1.024);transform-origin:0 50%;">84</span>
<span class="c" style="top:312px;font-size:11.1px;line-height:16px;color:#000;left:521.10px;transform:scaleX(1.101);transform-origin:0 50%;">7/8/2017</span>
<span class="c" style="top:312px;font-size:11.1px;line-height:16px;color:#000;left:622.60px;transform:scaleX(1.083);transform-origin:0 50%;">9/29/2017</span>
<span class="c" style="top:312px;font-size:11.1px;line-height:16px;color:#000;left:717.85px;transform:scaleX(0.958);transform-origin:0 50%;">Phase 1</span>
<span class="c" style="top:330px;font-size:11.1px;line-height:16px;color:#000;left:448.60px;transform:scaleX(1.055);transform-origin:0 50%;">130</span>
<span class="c" style="top:330px;font-size:11.1px;line-height:16px;color:#000;left:521.10px;transform:scaleX(1.094);transform-origin:0 50%;">9/1/2017</span>
<span class="c" style="top:330px;font-size:11.1px;line-height:16px;color:#000;left:622.60px;transform:scaleX(1.105);transform-origin:0 50%;">1/8/2018</span>
<span class="c" style="top:330px;font-size:11.1px;line-height:16px;color:#000;left:717.85px;transform:scaleX(0.959);transform-origin:0 50%;">Phase 2</span>
<span class="c" style="top:347px;font-size:11.1px;line-height:16px;color:#000;left:448.60px;transform:scaleX(1.095);transform-origin:0 50%;">118</span>
<span class="c" style="top:347px;font-size:11.1px;line-height:16px;color:#000;left:521.10px;transform:scaleX(1.096);transform-origin:0 50%;">12/2/2017</span>
<span class="c" style="top:347px;font-size:11.1px;line-height:16px;color:#000;left:622.60px;transform:scaleX(1.08);transform-origin:0 50%;">3/29/2018</span>
<span class="c" style="top:347px;font-size:11.1px;line-height:16px;color:#000;left:717.85px;transform:scaleX(1.035);transform-origin:0 50%;">Testing</span>
<span class="c" style="top:364px;font-size:11.1px;line-height:16px;color:#000;left:448.60px;transform:scaleX(1.027);transform-origin:0 50%;">64</span>
<span class="c" style="top:364px;font-size:11.1px;line-height:16px;color:#000;left:521.10px;transform:scaleX(1.103);transform-origin:0 50%;">3/11/2018</span>
<span class="c" style="top:364px;font-size:11.1px;line-height:16px;color:#000;left:622.60px;transform:scaleX(1.083);transform-origin:0 50%;">5/13/2018</span>
<span class="c" style="top:364px;font-size:11.1px;line-height:16px;color:#000;left:717.85px;transform:scaleX(1.029);transform-origin:0 50%;">Roll out</span>
<span class="c" style="top:381px;font-size:11.1px;line-height:16px;color:#000;left:448.60px;transform:scaleX(1.028);transform-origin:0 50%;">57</span>
<span class="c" style="top:381px;font-size:11.1px;line-height:16px;color:#000;left:521.10px;transform:scaleX(1.075);transform-origin:0 50%;">4/22/2018</span>
<span class="c" style="top:381px;font-size:11.1px;line-height:16px;color:#000;left:622.60px;transform:scaleX(1.081);transform-origin:0 50%;">6/17/2018</span>
<span class="c" style="top:381px;font-size:11.1px;line-height:16px;color:#000;left:717.85px;transform:scaleX(1.026);transform-origin:0 50%;">Support</span>
<svg style="left:0;top:0" width="1024" height="503" viewBox="0 0 1024 503"><rect x="1009" y="163.5" width="11.5" height="289" fill="#f3f3f3"/><rect x="1009.5" y="152.5" width="11" height="10.6" fill="#fff" stroke="#ababab" stroke-width="1"/><rect x="1009.5" y="163.6" width="11" height="19" fill="#fff" stroke="#ababab" stroke-width="1"/><rect x="1009.5" y="452.6" width="11" height="10.6" fill="#fff" stroke="#ababab" stroke-width="1"/><path d="M1012.2 159 L1015 155.8 L1017.8 159 Z" fill="#666"/><path d="M1012.2 456.6 L1015 459.8 L1017.8 456.6 Z" fill="#666"/><rect x="1" y="463.8" width="1022" height="20" fill="#f5f5f5"/><rect x="1" y="483.7" width="1022" height="1.1" fill="#fff"/><rect x="1" y="463" width="1006" height="1" fill="#ababab"/><rect x="185.2" y="462.8" width="72.6" height="19" fill="#fff"/><rect x="185.2" y="481.2" width="72.6" height="2" fill="#217346"/><rect x="184.8" y="464" width="1" height="17.5" fill="#c6c6c6"/><rect x="257.4" y="464" width="1" height="17.5" fill="#c6c6c6"/><rect x="78.6" y="466.5" width="1.1" height="15" fill="#c6c6c6"/><rect x="139.1" y="466.5" width="1.1" height="15" fill="#c6c6c6"/><path d="M25.4 471.2 V476.4 L21.8 473.8 Z" fill="#c0c0c0"/><path d="M44.2 471.2 V476.4 L47.8 473.8 Z" fill="#c0c0c0"/><circle cx="289.7" cy="474" r="5.6" fill="#fff" stroke="#777" stroke-width="1"/><path d="M286.7 474 H292.7 M289.7 471 V477" stroke="#666" stroke-width="1.2"/><rect x="761" y="469" width="234" height="11.4" fill="#e8e8e8"/><rect x="627.5" y="469.2" width="11.3" height="10.8" fill="#fff" stroke="#ababab" stroke-width="1"/><rect x="638.8" y="469.2" width="122" height="10.8" fill="#fff" stroke="#ababab" stroke-width="1"/><rect x="995" y="469.2" width="11.3" height="10.8" fill="#fff" stroke="#ababab" stroke-width="1"/><path d="M634.6 471.8 V477.4 L631 474.6 Z" fill="#555"/><path d="M999.2 471.8 V477.4 L1002.8 474.6 Z" fill="#555"/><rect x="614.4" y="470.6" width="1.3" height="1.3" fill="#a0a0a0"/><rect x="614.4" y="473.5" width="1.3" height="1.3" fill="#a0a0a0"/><rect x="614.4" y="476.4" width="1.3" height="1.3" fill="#a0a0a0"/><rect x="0" y="484.7" width="1024" height="18.3" fill="#217346"/><rect x="887.7" y="493" width="77.8" height="1" fill="#cfe0d6"/><rect x="925" y="488.8" width="3" height="8.8" fill="#fff"/><rect x="880" y="492.8" width="4.8" height="1.5" fill="#fff"/><rect x="968.4" y="492.8" width="6.4" height="1.5" fill="#fff"/><rect x="970.85" y="490.3" width="1.5" height="6.5" fill="#fff"/><rect x="787" y="485.6" width="30" height="17.4" fill="#166a3c"/><g transform="translate(796,488.2)" fill="none" stroke="#e4efe8" stroke-width="1"><rect x="0.5" y="0.5" width="10" height="9.4"/><path d="M3.8 0.5 V9.9 M7.2 0.5 V9.9 M0.5 3.6 H10.5 M0.5 6.8 H10.5"/></g><g transform="translate(826,488.2)" fill="none" stroke="#e4efe8" stroke-width="1"><rect x="0.5" y="0.5" width="10" height="9.4"/><rect x="2.8" y="2.6" width="5.4" height="5.2"/><path d="M4 5.2 H7" /></g><g transform="translate(855.6,488.2)" fill="none" stroke="#e4efe8" stroke-width="1"><rect x="0.5" y="0.5" width="10" height="9.4"/><path d="M1.6 1 V6.4 H4.4 V1 M6.2 1 V6.4" stroke-width="1.6"/></g></svg>
<span class="t" style="top:468px;font-size:10px;line-height:14px;color:#444;left:90.69px;transform:scaleX(0.985);transform-origin:0 50%;">Timeline</span>
<span class="t" style="top:468px;font-size:10px;line-height:14px;color:#444;left:149.64px;transform:scaleX(0.981);transform-origin:0 50%;">Gantt</span>
<span class="t" style="top:468px;font-size:10px;line-height:14px;font-weight:bold;color:#217346;left:194.01px;transform:scaleX(0.986);transform-origin:0 50%;">ProjectPlan</span>
<span class="t" style="top:488px;font-size:9.3px;line-height:13px;color:#fff;left:6.33px;transform:scaleX(0.815);transform-origin:0 50%;">READY</span>
<span class="t" style="top:488px;font-size:9.3px;line-height:13px;color:#fff;left:44.41px;transform:scaleX(0.828);transform-origin:0 50%;">CALCULATE</span>
<span class="t" style="top:488px;font-size:9.3px;line-height:13px;color:#fff;left:986.67px;transform:scaleX(0.878);transform-origin:0 50%;">100%</span>
<svg style="left:0;top:0" width="1024" height="503" viewBox="0 0 1024 503"><rect x="0" y="0" width="1024" height="1" fill="#3a8257"/><rect x="0" y="0" width="0.95" height="485" fill="#3a8257"/><rect x="1023" y="0" width="1" height="485" fill="#5a9a76"/></svg>
</div></body></html>
